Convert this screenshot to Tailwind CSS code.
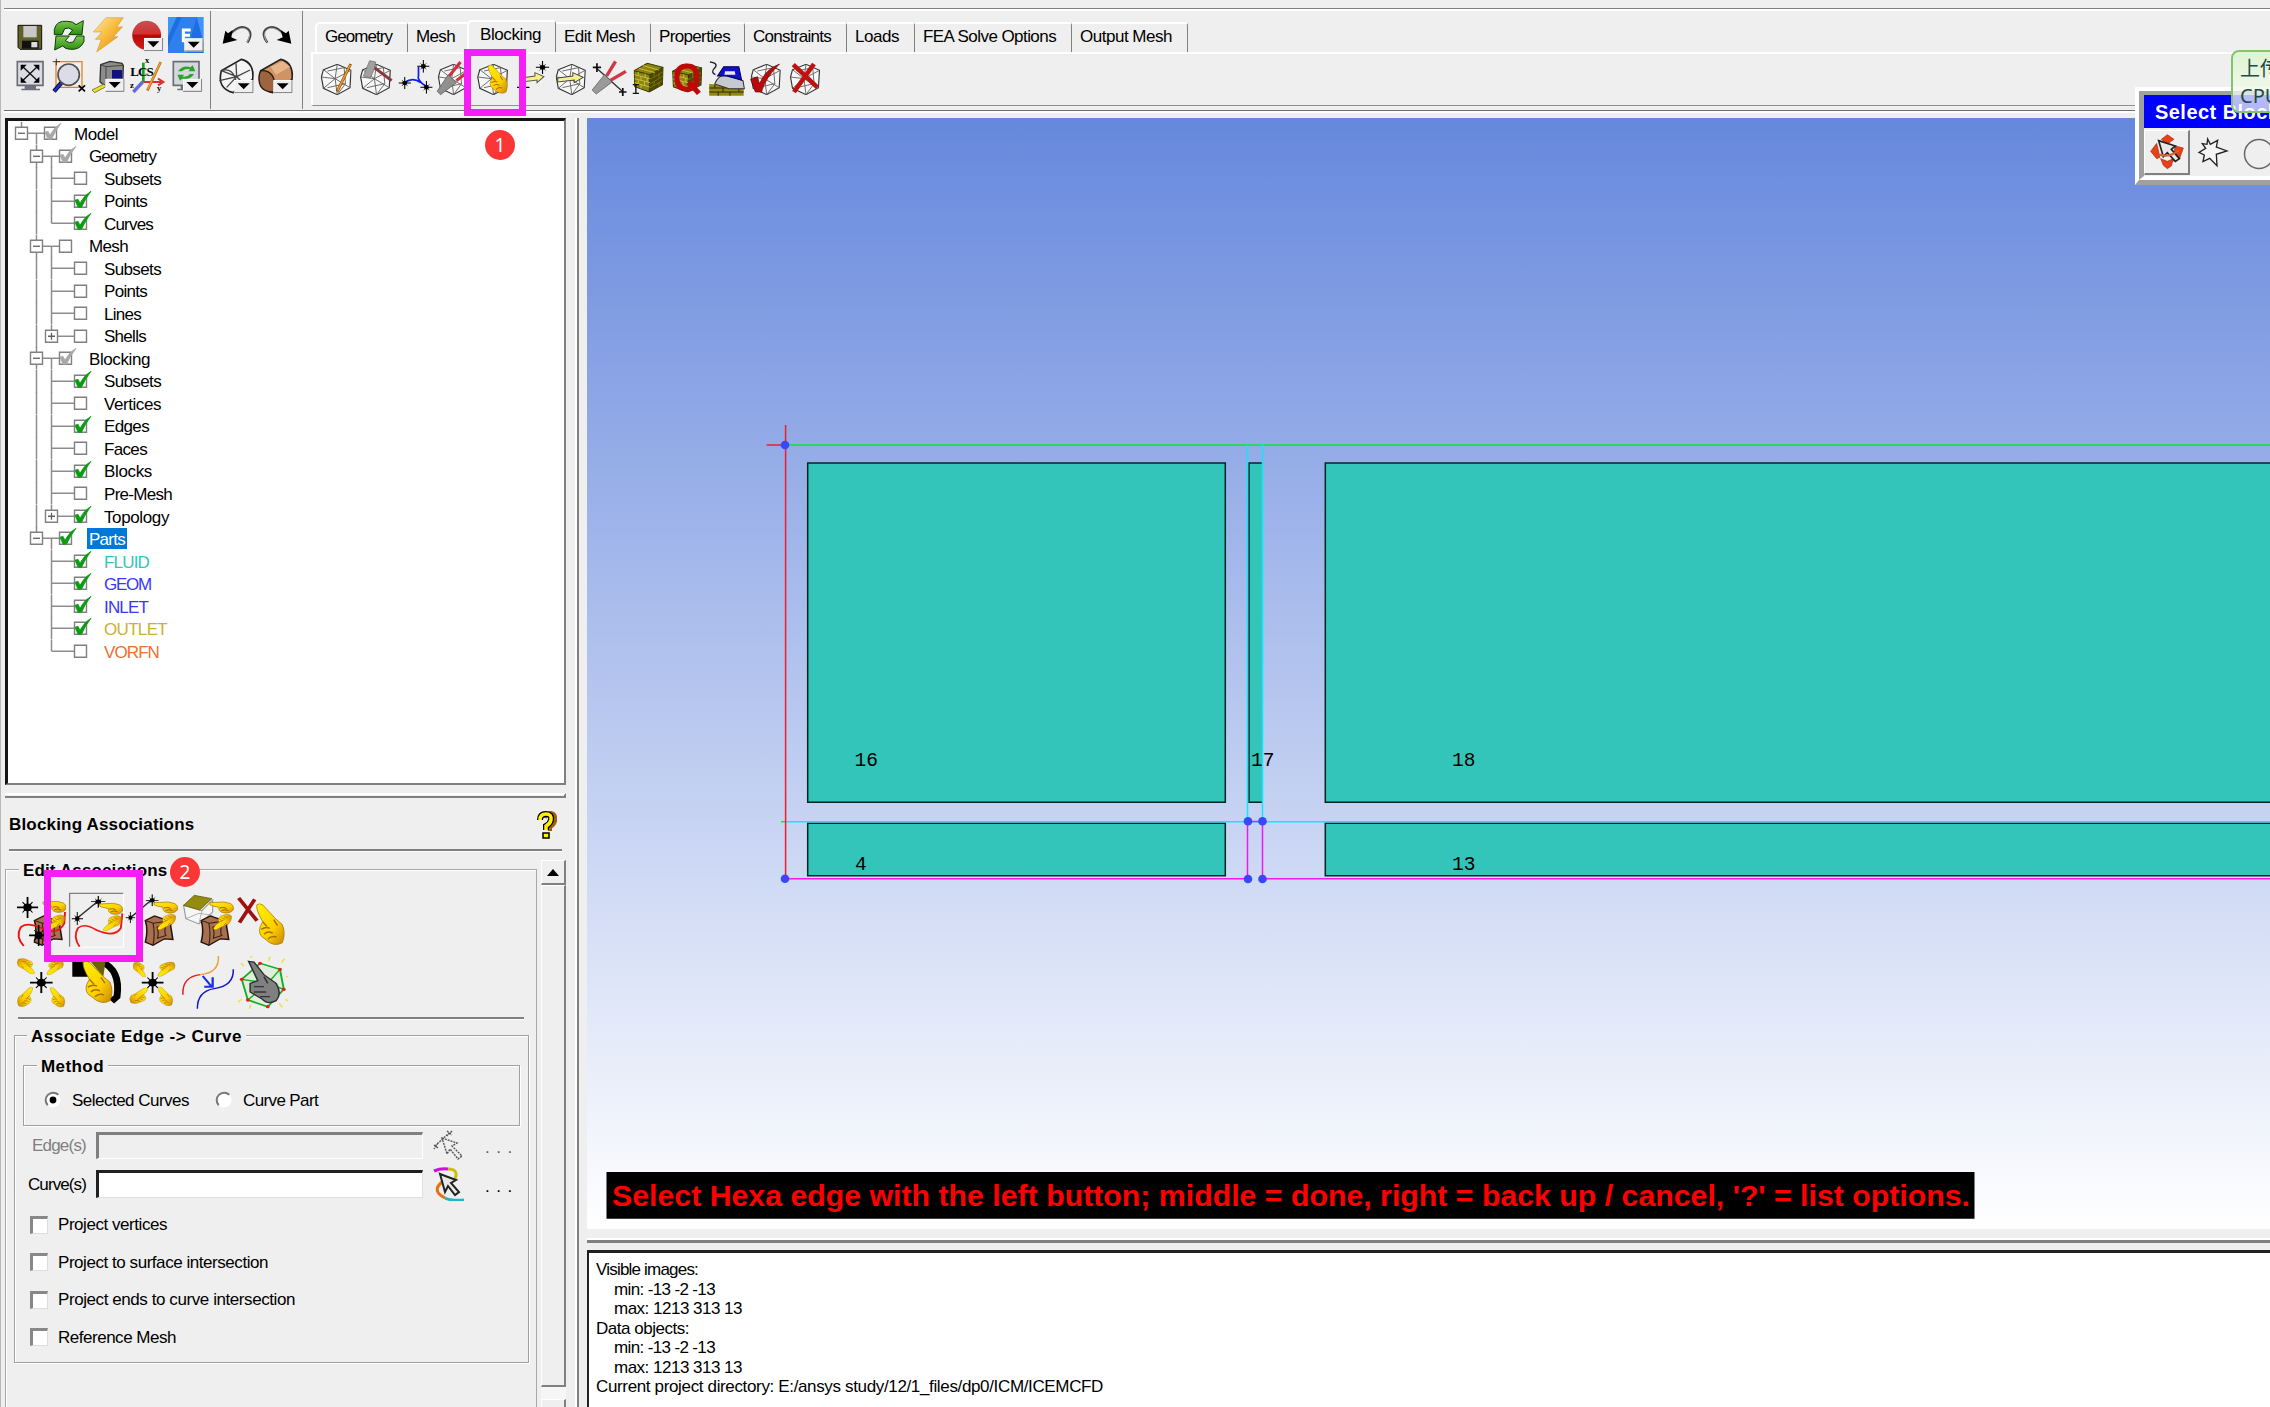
<!DOCTYPE html>
<html lang="en">
<head>
<meta charset="utf-8">
<title>ICEM CFD - Blocking</title>
<script src="https://cdn.jsdelivr.net/npm/@tailwindcss/browser@4"></script>
</head>
<body class="overflow-hidden">
<!-- shared glyphs -->
<svg class="absolute w-0 h-0" aria-hidden="true">
  <defs>
    <linearGradient id="gold" x1="0" y1="0" x2="1" y2="1"><stop offset="0" stop-color="#fff000"/><stop offset=".6" stop-color="#fbd000"/><stop offset="1" stop-color="#c98600"/></linearGradient>
    <linearGradient id="bolt" x1="0" y1="0" x2="1" y2="1"><stop offset="0" stop-color="#ffe9a0"/><stop offset=".5" stop-color="#f8b838"/><stop offset="1" stop-color="#d98212"/></linearGradient>
    <linearGradient id="red" x1="0" y1="0" x2="0" y2="1"><stop offset="0" stop-color="#c85050"/><stop offset=".45" stop-color="#d03030"/><stop offset=".5" stop-color="#b80808"/><stop offset="1" stop-color="#d41c1c"/></linearGradient>
    <linearGradient id="grn" x1="0" y1="0" x2="0" y2="1"><stop offset="0" stop-color="#7dc850"/><stop offset="1" stop-color="#2c8c10"/></linearGradient>
    <symbol id="wf" viewBox="0 0 90 95" preserveAspectRatio="none"><g fill="none" stroke="#333" stroke-width="3.4"><path d="M8 18L48 2L88 20L85 72L48 93L8 74L2 40Z" fill="#fff" fill-opacity=".5"/><path d="M42 45L48 2M42 45L88 20M42 45L85 72M42 45L48 93M42 45L8 74M42 45L8 18M2 40L42 45M68 12L72 60L48 93M68 12L20 22M72 60L20 72" stroke="#666" stroke-width="2.8"/></g></symbol>
    <symbol id="hand" viewBox="0 0 64 90" preserveAspectRatio="none"><path d="M3 3Q0 12 15 38L10 48Q4 66 20 74Q38 92 56 82Q64 62 56 44L42 32L16 4Q8 -2 3 3Z" fill="url(#gold)" stroke="#a87400" stroke-width="1.6"/><path d="M12 54Q22 48 30 52M18 64Q26 56 36 62M26 74Q34 66 44 70M15 38L24 48M38 34L46 46" fill="none" stroke="#b06c00" stroke-width="3"/></symbol>
    <symbol id="point" viewBox="0 0 60 40" preserveAspectRatio="none"><path d="M2 6Q0 14 10 16L24 20Q22 32 34 36Q50 40 58 28Q60 12 50 8L36 4Z" fill="url(#gold)" stroke="#b07c00" stroke-width="2"/><path d="M26 22Q36 18 42 24M30 30Q38 24 46 30" fill="none" stroke="#a86800" stroke-width="3"/></symbol>
    <symbol id="star" viewBox="0 0 60 66" preserveAspectRatio="none"><path d="M30 0V66M0 33H60" stroke="#000" stroke-width="5"/><circle cx="30" cy="33" r="12"/><path d="M16 17L44 49M44 17L16 49" stroke="#000" stroke-width="3"/></symbol>
    <symbol id="brown" viewBox="0 0 85 100" preserveAspectRatio="none"><path d="M6 20L30 6L50 14L80 18L72 34L78 78L56 76L26 96L6 86Q14 50 6 20Z" fill="#a87050" stroke="#20140c" stroke-width="4"/><path d="M6 20L26 28Q32 60 26 96M26 28L78 20M36 40L60 34Q54 56 60 66L38 74Q42 56 36 40" fill="none" stroke="#3a2010" stroke-width="3"/></symbol>
    <symbol id="dd" viewBox="0 0 58 40"><path d="M0 0H58V40H0Z" fill="#efefef"/><path d="M1 39V1H56" fill="none" stroke="#fff" stroke-width="3"/><path d="M0 38H56V0" fill="none" stroke="#777" stroke-width="3"/><path d="M10 10H46L28 28Z"/></symbol>
    <symbol id="bricks" viewBox="0 0 88 90" preserveAspectRatio="none"><path d="M2 24L40 2L86 14L84 66L46 88L4 72Z" fill="#8c8410" stroke="#3c3800" stroke-width="3"/><path d="M2 24L48 36L86 14" fill="none" stroke="#3c3800" stroke-width="3"/><path d="M48 36L46 88" stroke="#222" stroke-width="3"/><path d="M48 36L86 14L84 66L46 88Z" fill="#4c4804"/><path d="M3 36L48 48M3 48L48 60M4 60L47 73M14 28V38M34 33V44M22 42V53M40 46V58M14 52V63M32 56V68M22 65V77M16 17L62 30M28 9L74 22" stroke="#d0c840" stroke-width="2.5"/><path d="M48 50L85 28M48 64L85 41M47 76L84 54M60 30V42M74 34V46M60 56V68M74 60V70" stroke="#8c8410" stroke-width="2"/></symbol>
  </defs>
</svg>

<div class="w-[2270px] h-[1407px] overflow-hidden bg-[#efefef] border-l border-[#b8b8b8] flex flex-col font-['Liberation_Sans',Arial,sans-serif] text-[17px] leading-none text-black relative whitespace-nowrap">

  <!-- top toolbar -->
  <header class="h-[112px] shrink-0 pl-[3px] pt-[8px] flex flex-col">
    <div class="h-[3px] shrink-0 border-t-[1.5px] border-[#808080] border-b-2 border-b-white"></div>
    <div class="h-[98px] shrink-0 flex">
      <div class="w-[207px] pl-[12px] pt-[5px] flex flex-col gap-[4px] border-r border-[#808080] shrink-0">
        <div class="flex h-[38px]">
          <svg class="w-[35px] h-[38px]" viewBox="48 48 105 114"><path d="M54 76H125V148H60L54 142Z" fill="#606028" stroke="#111" stroke-width="3"/><path d="M70 78H110V112H70Z" fill="#c8c8c8"/><path d="M66 122H116V146H66Z" fill="#111"/><path d="M94 126H112V142H94Z" fill="#ddd"/></svg>
          <svg class="w-[39px] h-[38px]" viewBox="153 48 117 114"><g fill="url(#grn)" stroke="#0c3c06" stroke-width="3"><path d="M163 104V88Q170 60 202 64Q220 64 228 74L250 62L246 104H206L218 90Q206 80 194 86L186 104Z"/><path d="M252 108V124Q242 150 212 148Q196 148 188 138L164 150L168 108H208L196 122Q208 132 220 126L230 108Z"/></g></svg>
          <svg class="w-[39px] h-[38px]" viewBox="270 48 117 114"><path d="M318 53H370L350 82L368 80L340 110L354 110L290 156L304 118L286 118L306 96L280 96Z" fill="url(#bolt)" stroke="#c89030" stroke-width="1.5"/></svg>
          <svg class="w-[38px] h-[38px]" viewBox="387 48 114 114"><circle cx="440" cy="106" r="43" fill="url(#red)" stroke="#a03030" stroke-width="1"/><use href="#dd" x="432" y="114" width="58" height="40"/></svg>
          <svg class="w-[40px] h-[38px]" viewBox="501 48 120 114"><path d="M504 51H611V159H504Z" fill="#3f94f4"/><path d="M530 51H590L611 130V159H504V110Z" fill="#1f6de0"/><path d="M545 51H590L560 159H504V140Z" fill="#2f80ea"/><path d="M572 90H550V122H566M550 106H570" stroke="#fff" stroke-width="9" fill="none"/><use href="#dd" x="553" y="115" width="58" height="40"/></svg>
        </div>
        <div class="flex h-[42px]">
          <svg class="w-[35px] h-[38px]" viewBox="48 168 105 114"><path d="M52 179H129V250H52Z" fill="#dcdce4" stroke="#6c6c74" stroke-width="5"/><path d="M74 252H108V260H120V265H64V260H74Z" fill="#70707c"/><path d="M66 192L114 238M114 192L66 238" stroke="#111" stroke-width="4"/><path d="M62 188H80L62 206ZM118 188H100L118 206ZM62 242H80L62 224ZM118 242H100L118 224Z"/></svg>
          <svg class="w-[39px] h-[38px]" viewBox="153 168 117 114"><path d="M168 179H246V256H168Z" fill="none" stroke="#e88028" stroke-width="4"/><path d="M158 179H180M169 170V190" stroke="#222" stroke-width="2.5"/><path d="M162 268L186 240" stroke="#111" stroke-width="13"/><path d="M163 267L185 242" stroke="#1a2cf0" stroke-width="7"/><circle cx="206" cy="218" r="32" fill="#dcdce8" stroke="#505050" stroke-width="5"/><path d="M236 250L255 268M255 250L236 268" stroke="#000" stroke-width="5"/></svg>
          <svg class="w-[39px] h-[38px]" viewBox="270 168 117 114"><path d="M302 188L330 178L366 184L370 190L368 252H316L300 240Z" fill="#8c8c8c" stroke="#333" stroke-width="4"/><path d="M302 188L318 194L368 190M318 194V250" stroke="#444" stroke-width="3" fill="none"/><path d="M336 204H366V230H336Z" fill="#101080"/><path d="M276 264L312 246L318 254L284 272Z" fill="#f0e020" stroke="#444" stroke-width="2"/><use href="#dd" x="316" y="230" width="58" height="40"/></svg>
          <svg class="w-[38px] h-[38px]" viewBox="387 168 114 114"><path d="M430 240V182" stroke="#18a028" stroke-width="8"/><path d="M430 240H484M474 230L490 240L474 250" stroke="#d83030" stroke-width="6" fill="none"/><path d="M428 240L400 270" stroke="#6868d8" stroke-width="10"/><path d="M482 180L442 266" stroke="#c87410" stroke-width="8"/><path d="M481 182L443 262" stroke="#f0b040" stroke-width="3"/><g font-family="Liberation Serif,serif" font-weight="bold"><text x="391" y="222" font-size="39" textLength="70">LCS</text><text x="435" y="183" font-size="26">x</text><text x="390" y="259" font-size="26">z</text><text x="471" y="266" font-size="26">y</text></g></svg>
          <svg class="w-[40px] h-[38px]" viewBox="501 168 120 114"><path d="M520 179H597V250H520Z" fill="#d4d8dc" stroke="#6c6c74" stroke-width="5"/><path d="M542 252H576V265H532V260H542Z" fill="#70707c"/><path d="M534 208Q548 188 572 196L578 190L586 208H566L570 202Q556 198 546 208ZM582 216Q570 236 546 230L540 236L532 218H552L548 224Q562 226 570 216Z" fill="#28a428"/><use href="#dd" x="549" y="230" width="58" height="40"/></svg>
        </div>
      </div>
      <div class="w-[92px] pl-[7px] pt-[5px] flex flex-col gap-[4px] shrink-0 border-r-[1.5px] border-[#808080]">
        <div class="flex h-[38px]">
          <svg class="w-[40px] h-[38px]" viewBox="654 48 120 114"><path d="M742 128Q760 100 742 86Q718 72 690 104" fill="none" stroke="#444" stroke-width="7"/><path d="M742 126Q756 100 740 88Q718 76 692 106" fill="none" stroke="#ddd" stroke-width="2"/><path d="M668 131L676 92L684 100L698 90L694 112L712 120Z"/></svg>
          <svg class="w-[40px] h-[38px]" viewBox="774 48 120 114"><path d="M802 128Q782 100 800 86Q824 72 850 102" fill="none" stroke="#444" stroke-width="7"/><path d="M800 126Q786 100 802 88Q824 76 848 104" fill="none" stroke="#ddd" stroke-width="2"/><path d="M874 131L866 92L858 100L842 90L848 112L830 120Z"/></svg>
        </div>
        <div class="flex h-[42px]">
          <svg class="w-[39px] h-[38px]" viewBox="654 164 117 114"><path d="M664 202L724 168Q764 178 758 228L700 268Q650 256 664 202Z" fill="#f4f4f4" stroke="#222" stroke-width="5"/><path d="M664 202Q700 190 710 240Q710 260 700 268M708 180L710 220L658 232M710 220L750 200M680 252L710 220M664 202L710 220L740 250" fill="none" stroke="#444" stroke-width="4"/><use href="#dd" x="703" y="230" width="58" height="40"/></svg>
          <svg class="w-[41px] h-[38px]" viewBox="771 164 123 114"><path d="M782 202L842 168Q882 178 876 228L818 268Q768 256 782 202Z" fill="#d09464" stroke="#222" stroke-width="5"/><path d="M784 202Q830 200 824 266Q780 268 777 230Q776 208 784 202Z" fill="#9c6440" stroke="#2c1808" stroke-width="4"/><path d="M812 190L848 174L870 190L828 214Z" fill="#e8b48c"/><use href="#dd" x="820" y="230" width="58" height="40"/></svg>
        </div>
      </div>
      <!-- tabs -->
      <div class="flex-1 pl-[8px] pt-[9px] flex flex-col min-w-0">
        <nav class="flex items-end h-[32px] shrink-0 pl-[4px]">
          <div class="w-[93px] h-[30px] pl-[8px] pb-[3px] flex items-center rounded-tl-[5px] rounded-tr-[4px] border-t-2 border-l-2 border-white border-r-[1.5px] border-r-[#808080]"><span data-w="67">Geometry</span></div>
          <div class="w-[59px] h-[30px] pl-[8px] pb-[3px] flex items-center border-t-2 border-white"><span data-w="39">Mesh</span></div>
          <div class="w-[89px] h-[32px] pl-[11px] pb-[5px] flex items-center rounded-tl-[5px] rounded-tr-[4px] border-t-2 border-l-2 border-white border-r-[1.5px] border-r-[#808080]"><span data-w="61">Blocking</span></div>
          <div class="w-[95px] h-[30px] pl-[8px] pb-[3px] flex items-center rounded-tr-[4px] border-t-2 border-white border-r-[1.5px] border-r-[#808080]"><span data-w="71">Edit Mesh</span></div>
          <div class="w-[94px] h-[30px] pl-[8px] pb-[3px] flex items-center rounded-tr-[4px] border-t-2 border-white border-r-[1.5px] border-r-[#808080]"><span data-w="71">Properties</span></div>
          <div class="w-[102px] h-[30px] pl-[8px] pb-[3px] flex items-center rounded-tr-[4px] border-t-2 border-white border-r-[1.5px] border-r-[#808080]"><span data-w="78">Constraints</span></div>
          <div class="w-[68px] h-[30px] pl-[8px] pb-[3px] flex items-center rounded-tr-[4px] border-t-2 border-white border-r-[1.5px] border-r-[#808080]"><span data-w="44">Loads</span></div>
          <div class="w-[157px] h-[30px] pl-[8px] pb-[3px] flex items-center rounded-tr-[4px] border-t-2 border-white border-r-[1.5px] border-r-[#808080]"><span data-w="134">FEA Solve Options</span></div>
          <div class="w-[116px] h-[30px] pl-[8px] pb-[3px] flex items-center rounded-tr-[4px] border-t-2 border-white border-r-[1.5px] border-r-[#808080]"><span data-w="92">Output Mesh</span></div>
        </nav>
        <div class="h-[54px] shrink-0 border-t-2 border-l-2 border-white border-b-[1.5px] border-b-[#909090] pl-[7px] pt-[4px]">
          <svg class="w-[506px] h-[42px]" viewBox="60 172 1469 126" preserveAspectRatio="none">
            <use href="#wf" x="62" y="189" width="90" height="95"/><path d="M149 190L110 272" stroke="#704000" stroke-width="8"/><path d="M148 192L111 270" stroke="#f09820" stroke-width="5"/>
            <use href="#wf" x="176" y="189" width="90" height="95"/><path d="M214 198L268 240" stroke="#883838" stroke-width="9"/><path d="M204 180L222 184L218 204L206 232L186 226Z" fill="#a0a0a0" stroke="#666" stroke-width="2"/>
            <path d="M346 198V222Q340 240 370 258M306 246Q330 228 352 246" stroke="#1020e8" stroke-width="5" fill="none"/><use href="#star" x="342" y="178" width="36" height="38"/><use href="#star" x="288" y="228" width="36" height="38"/><use href="#star" x="351" y="241" width="36" height="38"/>
            <use href="#wf" x="402" y="189" width="86" height="95"/><path d="M468 184L432 230M496 208L456 240" stroke="#d03040" stroke-width="9"/><path d="M432 222L456 246L410 282L400 272Z" fill="#909090" stroke="#555" stroke-width="2"/>
            <use href="#wf" x="516" y="189" width="90" height="95"/><use href="#hand" x="546" y="192" width="62" height="90"/>
            <path d="M645 232L684 226V216L710 228L690 246V238L645 244Z" fill="#f8f080" stroke="#555" stroke-width="3"/><use href="#star" x="686" y="180" width="40" height="40"/><path d="M632 260H668M650 250V272" stroke="#000" stroke-width="4"/>
            <use href="#wf" x="744" y="189" width="88" height="95"/><path d="M750 232L794 226V216L824 230L798 246V238L750 244Z" fill="#f8f090" stroke="#444" stroke-width="3"/>
            <path d="M860 200L940 274" stroke="#333" stroke-width="4"/><path d="M852 200H876M864 188V214M928 274H950M939 262V286" stroke="#111" stroke-width="5"/><path d="M918 182L892 226M948 212L902 240" stroke="#d03848" stroke-width="10"/><path d="M886 222L908 244L862 280L850 268Z" fill="#9a9a9a" stroke="#555" stroke-width="2"/>
            <use href="#bricks" x="970" y="186" width="88" height="90"/><path d="M968 252H986M977 252V278M968 278H986" stroke="#111" stroke-width="4"/>
            <use href="#bricks" x="1082" y="188" width="88" height="88"/><path fill="none" stroke="#c00808" stroke-width="15" d="M1126 196Q1154 196 1154 230Q1154 266 1126 266Q1096 266 1096 230Q1096 196 1126 196M1130 244L1160 278"/>
            <path d="M1190 250L1290 256V285H1190Z" fill="#908810"/><path d="M1190 262H1290M1190 274H1290M1206 252V262M1230 262V274M1256 252V262M1216 274V285M1250 274V285M1276 262V274" stroke="#302c00" stroke-width="3"/><path d="M1206 250Q1216 222 1240 222L1288 240L1292 264H1248Z" fill="#c8c8d0" stroke="#333" stroke-width="3"/><path d="M1214 226L1232 198H1276L1284 238L1240 226Z" fill="#1010c8" stroke="#000060" stroke-width="3"/><path d="M1236 212H1264L1266 222H1234Z" fill="#e8e8f0"/><path d="M1192 184Q1220 188 1204 204Q1194 216 1208 222" fill="none" stroke="#222" stroke-width="4"/>
            <use href="#wf" x="1310" y="189" width="88" height="95"/><path d="M1310 236L1330 228L1336 250Q1352 206 1394 190Q1352 232 1342 274H1324Z" fill="#b80c0c" stroke="#700" stroke-width="2"/>
            <use href="#wf" x="1424" y="189" width="88" height="95"/><path d="M1434 192L1504 260M1494 190L1436 274" stroke="#c01010" stroke-width="13"/>
          </svg>
        </div>
      </div>
    </div>
    <div class="mt-[1px] h-[3px] shrink-0 border-t-[1.5px] border-[#707070] border-b-2 border-b-white"></div>
  </header>

  <div class="flex-1 flex min-h-0">
    <!-- left column -->
    <aside class="w-[574px] shrink-0 flex flex-col pl-[4px] pt-[6px]">
      <div id="tree" class="w-[561px] h-[667px] shrink-0 bg-white border-t-[3px] border-l-[3px] border-[#151515] border-r-2 border-b-2 border-r-[#808080] border-b-[#808080] pt-[1px] overflow-hidden"></div>
      <div class="mt-[8px] w-[561px] h-[5px] shrink-0 border-t-2 border-white border-b-2 border-b-[#808080] border-r-2 border-r-[#808080]"></div>
      <div class="w-[561px] h-[51px] shrink-0 pl-[4px] pr-[9px] pt-[2px] flex items-center justify-between">
        <span class="font-bold" data-b data-w="186">Blocking Associations</span>
        <svg class="w-[20px] h-[30px]" viewBox="0 0 20 30"><path d="M8 8Q9 3 14 3Q19 4 18 11Q17 15 13 17V21" fill="none" stroke="#a05c10" stroke-width="4"/><path d="M3 10Q3 4 9 4Q15 4 14 10Q13 14 9 16V20" fill="none" stroke="#000" stroke-width="6"/><path d="M3 10Q3 4 9 4Q15 4 14 10Q13 14 9 16V20" fill="none" stroke="#fff200" stroke-width="3.5"/><path d="M6 23H12V28H6Z" fill="#fff200" stroke="#000" stroke-width="1.5"/></svg>
      </div>
      <div class="ml-[4px] w-[553px] h-[3px] shrink-0 border-t-2 border-[#808080] border-b border-b-white"></div>
      <div class="flex flex-1 min-h-0">
        <!-- Edit Associations group -->
        <div class="mt-[17px] w-[532px] border-[1.5px] border-b-0 border-[#a8a8a8] shadow-[inset_1px_1px_0_#fff] flex flex-col pl-[8px]">
          <div class="h-[18px] -mt-[9px] shrink-0 ml-[5px] px-[4px] self-start bg-[#efefef] flex items-center font-bold"><span data-b data-w="145">Edit Associations</span></div>
          <svg class="mt-[9px] w-[275px] h-[126px] shrink-0 -ml-[1px]" viewBox="34 294 719 378" preserveAspectRatio="none">
            <use href="#brown" x="84" y="372" width="85" height="98"/><use href="#star" x="44" y="320" width="56" height="64"/><path d="M62 468Q40 440 54 412Q70 396 104 412Q150 440 168 400L170 366" fill="none" stroke="#f01010" stroke-width="5"/><use href="#star" x="76" y="404" width="50" height="64"/><use href="#point" x="110" y="330" width="64" height="40"/><g transform="translate(150 398) rotate(18) scale(1 -1)"><use href="#hand" x="-22" y="-30" width="40" height="58"/></g>
            <path d="M182 470V310H322" fill="none" stroke="#808080" stroke-width="3.5"/><path d="M184 472H323V312" fill="none" stroke="#fff" stroke-width="3"/>
            <path d="M200 386L256 334" stroke="#333" stroke-width="4"/><use href="#star" x="238" y="317" width="38" height="36"/><use href="#star" x="187" y="366" width="30" height="40"/><path d="M208 470Q190 440 204 414Q220 398 252 420Q300 444 316 414L320 370" fill="none" stroke="#f01818" stroke-width="5"/><use href="#point" x="258" y="336" width="64" height="40"/><g transform="translate(298 400) rotate(18) scale(1 -1)"><use href="#hand" x="-22" y="-30" width="40" height="58"/></g>
            <path d="M344 380L398 328" stroke="#333" stroke-width="4"/><use href="#star" x="381" y="313" width="34" height="36"/><use href="#star" x="328" y="366" width="26" height="34"/><use href="#brown" x="374" y="372" width="85" height="98"/><use href="#point" x="400" y="332" width="66" height="40"/><g transform="translate(440 396) rotate(18) scale(1 -1)"><use href="#hand" x="-22" y="-30" width="40" height="58"/></g>
            <path d="M480 346L528 362L556 330V366L520 402L486 386Z" fill="#f6f6f6" stroke="#999" stroke-width="3"/><path d="M520 402L528 362M486 386L520 370L556 376" stroke="#999" stroke-width="2" fill="none"/><path d="M508 316L554 326L522 360L480 346Z" fill="#948c10" stroke="#5c5400" stroke-width="2"/><use href="#brown" x="520" y="372" width="85" height="98"/><use href="#point" x="546" y="332" width="66" height="40"/><g transform="translate(586 396) rotate(18) scale(1 -1)"><use href="#hand" x="-22" y="-30" width="40" height="58"/></g>
            <path d="M624 324L672 392M666 328L626 398" stroke="#a01010" stroke-width="10"/><use href="#hand" x="668" y="340" width="80" height="130"/>
            <g transform="translate(67 528) scale(-1 -1)"><use href="#hand" x="-25" y="-25" width="50" height="50"/></g>
            <g transform="translate(146 532) scale(1 -1)"><use href="#hand" x="-25" y="-23" width="48" height="46"/></g>
            <g transform="translate(66 622) scale(-1 1)"><use href="#hand" x="-21" y="-31" width="44" height="62"/></g>
            <use href="#hand" x="130" y="592" width="42" height="62"/><use href="#star" x="78" y="546" width="60" height="64"/>
            <path d="M189 516H216L222 528L234 560H189Z"/><path d="M266 516Q316 540 306 620L292 634" fill="none" stroke="#000" stroke-width="18"/><path d="M236 514H276L270 560Z" fill="#6c6000"/><use href="#hand" x="214" y="512" width="84" height="132"/>
            <g transform="translate(364 538) scale(-1 -1)"><use href="#hand" x="-18" y="-24" width="36" height="48"/></g>
            <g transform="translate(437 536) scale(1 -1)"><use href="#hand" x="-26" y="-24" width="50" height="46"/></g>
            <g transform="translate(362 619) scale(-1 1)"><use href="#hand" x="-26" y="-26" width="52" height="50"/></g>
            <use href="#hand" x="412" y="590" width="42" height="60"/><use href="#star" x="370" y="546" width="58" height="64"/>
            <path d="M478 614Q476 560 524 554" fill="none" stroke="#e82020" stroke-width="4"/><path d="M524 554Q574 548 571 498" fill="none" stroke="#f0a040" stroke-width="4"/><path d="M516 656Q516 604 560 596Q612 588 610 538" fill="none" stroke="#1818c8" stroke-width="4"/><path d="M530 558L552 588M534 590H556V562" fill="none" stroke="#1830e0" stroke-width="6"/>
            <path d="M632 568L680 520L732 538L742 598L700 650L648 630Z" fill="#dfeedd" stroke="#10b020" stroke-width="5"/><path d="M632 568L700 580L732 538M700 580L742 598M648 630L700 580" stroke="#10b020" stroke-width="4" fill="none"/><path d="M650 514L664 516L690 554L722 580Q738 610 722 632Q700 646 684 626L654 606V580L674 572Z" fill="#808080" stroke="#303030" stroke-width="4"/><path d="M664 590H690M664 606H696M680 620H706M690 560L700 580" stroke="#333" stroke-width="4"/><path d="M658 504L656 498M702 512L706 500M736 518L744 506M748 560H758M746 628L756 634M730 640L738 652M656 644L652 656M622 636L632 628M630 520L638 528" stroke="#f0e040" stroke-width="4"/><g fill="#f01818"><circle cx="632" cy="568" r="5"/><circle cx="680" cy="520" r="5"/><circle cx="732" cy="538" r="5"/><circle cx="742" cy="598" r="5"/><circle cx="700" cy="650" r="5"/><circle cx="648" cy="630" r="5"/></g>
          </svg>
          <div class="mt-[3px] ml-[4px] w-[506px] h-[3px] shrink-0 border-t-2 border-[#808080] border-b border-b-white"></div>
          <!-- Associate group -->
          <div class="mt-[15px] w-[515px] h-[328px] shrink-0 border-[1.5px] border-[#a0a0a0] shadow-[inset_1px_1px_0_#fff,1px_1px_0_#fff] flex flex-col pl-[8px]">
            <div class="h-[18px] -mt-[9px] shrink-0 ml-[4px] px-[4px] self-start bg-[#efefef] flex items-center font-bold"><span data-b data-w="211">Associate Edge -&gt; Curve</span></div>
            <div class="mt-[20px] w-[497px] h-[61px] shrink-0 border-[1.5px] border-[#a0a0a0] shadow-[inset_1px_1px_0_#fff,1px_1px_0_#fff] flex flex-col">
              <div class="h-[18px] -mt-[9px] shrink-0 ml-[13px] px-[4px] self-start bg-[#efefef] flex items-center font-bold"><span data-b data-w="63">Method</span></div>
              <div class="flex items-center mt-[16px] ml-[20px]">
                <svg class="w-[18px] h-[18px] mr-[10px]" viewBox="0 0 18 18"><circle cx="9" cy="9" r="7.5" fill="#fff"/><path d="M3.7 14.3A7.5 7.5 0 0 1 14.3 3.7" fill="none" stroke="#777" stroke-width="2"/><circle cx="9" cy="9" r="3.4"/></svg>
                <span data-w="117" class="mr-[26px]">Selected Curves</span>
                <svg class="w-[18px] h-[18px] mr-[10px]" viewBox="0 0 18 18"><circle cx="9" cy="9" r="7.5" fill="#fff"/><path d="M3.7 14.3A7.5 7.5 0 0 1 14.3 3.7" fill="none" stroke="#777" stroke-width="2"/></svg>
                <span data-w="75">Curve Part</span>
              </div>
            </div>
            <div class="flex items-center h-[28px] mt-[5px] shrink-0">
              <div class="w-[64px] pr-[1px] flex justify-end text-[#808080]"><span data-w="54">Edge(s)</span></div>
              <div class="ml-[9px] w-[327px] h-[27px] border-t-[3px] border-l-[3px] border-[#808080] border-r border-b border-r-white border-b-white"></div>
              <svg class="ml-[9px] w-[32px] h-[32px]" viewBox="0 0 32 32" fill="none" stroke="#555" stroke-width="1.4"><path d="M2 16L6 19M6 14L2 20M3 17L17 4M15 2L20 6M20 2L15 7" stroke-dasharray="2 1"/><path d="M10 9L25 14L20 17L30 27L26 30L18 20L15 25Z" stroke-dasharray="2 1"/></svg>
              <span class="ml-[21px] pt-[4px] text-[#606060]" data-w="28">. . .</span>
            </div>
            <div class="flex items-center h-[28px] mt-[11px] shrink-0">
              <div class="w-[64px] pr-[1px] flex justify-end"><span data-w="58">Curve(s)</span></div>
              <div class="ml-[9px] w-[327px] h-[28px] bg-white border-t-[3px] border-l-[3px] border-[#202020] border-r border-b border-r-[#e0e0e0] border-b-[#e0e0e0]"></div>
              <svg class="ml-[10px] w-[32px] h-[34px]" viewBox="0 0 32 34" fill="none"><path d="M1 4Q8 1 15 2" stroke="#d010d8" stroke-width="3"/><path d="M15 2Q26 2 22 12" stroke="#c8c010" stroke-width="3"/><path d="M9 15Q-2 24 12 31" stroke="#e87010" stroke-width="3"/><path d="M12 31Q18 34 31 33" stroke="#20b8c0" stroke-width="3"/><path d="M7 7L23 13L18 16L26 25L22 28L15 19L12 25Z" fill="#e8e8e8" stroke="#222" stroke-width="2"/></svg>
              <span class="ml-[20px] pt-[4px]" data-w="28">. . .</span>
            </div>
            <div class="mt-[8px] ml-[7px] flex flex-col">
              <div class="h-[37.5px] flex items-center"><i class="w-[18px] h-[18px] mr-[10px] bg-white border-t-[3px] border-l-[3px] border-[#888] border-r border-b border-r-[#ddd] border-b-[#ddd]"></i><span data-w="109">Project vertices</span></div>
              <div class="h-[37.5px] flex items-center"><i class="w-[18px] h-[18px] mr-[10px] bg-white border-t-[3px] border-l-[3px] border-[#888] border-r border-b border-r-[#ddd] border-b-[#ddd]"></i><span data-w="210">Project to surface intersection</span></div>
              <div class="h-[37.5px] flex items-center"><i class="w-[18px] h-[18px] mr-[10px] bg-white border-t-[3px] border-l-[3px] border-[#888] border-r border-b border-r-[#ddd] border-b-[#ddd]"></i><span data-w="237">Project ends to curve intersection</span></div>
              <div class="h-[37.5px] flex items-center"><i class="w-[18px] h-[18px] mr-[10px] bg-white border-t-[3px] border-l-[3px] border-[#888] border-r border-b border-r-[#ddd] border-b-[#ddd]"></i><span data-w="118">Reference Mesh</span></div>
            </div>
          </div>
        </div>
        <!-- scrollbar -->
        <div class="mt-[8px] ml-[4px] w-[25px] flex flex-col bg-[#f6f6f6]">
          <div class="h-[25px] shrink-0 bg-[#efefef] border-t border-l border-white border-r-2 border-b-2 border-r-[#808080] border-b-[#808080] flex items-center justify-center"><svg class="w-[12px] h-[7px]" viewBox="0 0 12 7"><path d="M0 7L6 0L12 7Z"/></svg></div>
          <div class="h-[502px] shrink-0 bg-[#efefef] border-t border-l border-white border-r-2 border-b-2 border-r-[#808080] border-b-[#808080]"></div>
          <div class="h-[12px] shrink-0"></div>
          <div class="flex-1 bg-[#efefef] border-t border-l border-white border-r-2 border-r-[#808080]"></div>
        </div>
      </div>
    </aside>
    <div class="mt-[6px] w-[4px] shrink-0 border-l-2 border-white border-r-2 border-r-[#808080]"></div>

    <!-- right column -->
    <main class="ml-[8px] flex-1 min-w-0 flex flex-col pt-[6px]">
      <svg class="w-[1684px] h-[1111px] shrink-0 block" viewBox="587 118 1684 1111">
        <defs><linearGradient id="sky" x1="0" y1="0" x2="0" y2="1"><stop offset="0" stop-color="#6688dd"/><stop offset="1" stop-color="#fff"/></linearGradient></defs>
        <path d="M587 118H2271V1229H587Z" fill="url(#sky)"/>
        <g fill="#33c5b9" stroke="#0a2422" stroke-width="1.5">
          <path d="M807.7 463H1225.3V802.3H807.7Z"/><path d="M1262 463H1249V802.3H1262"/><path d="M2280 463H1325.3V802.3H2280"/>
          <path d="M807.7 823.3H1225.3V875.7H807.7Z"/><path d="M2280 823.3H1325.3V875.7H2280"/>
        </g>
        <g fill="none" stroke-width="1.5">
          <path d="M785 445H2271" stroke="#22dd55" stroke-width="2"/>
          <path d="M785 821.7H2271M1247.5 445V821M1262.5 443V821" stroke="#10e8fa"/>
          <path d="M781 821.7H785" stroke="#30e030"/>
          <path d="M785 878.7H1248M1262.5 878.7H2271M1247.5 821V879M1262.5 821V879M1248 821.5H1262" stroke="#f018f0"/>
          <path d="M785.6 425V879M766.6 445H785" stroke="#f01c30"/>
        </g>
        <g fill="#3848f8"><circle cx="785" cy="445" r="4.3"/><circle cx="785" cy="878.7" r="4.3"/><circle cx="1248" cy="821.3" r="4.3"/><circle cx="1262.5" cy="821.3" r="4.3"/><circle cx="1248" cy="879" r="4.3"/><circle cx="1262.5" cy="879" r="4.3"/></g>
        <g font-family="Liberation Mono,monospace" font-size="19.5"><text x="854.5" y="765.5">16</text><text x="1251" y="765.5">17</text><text x="1452" y="765.5">18</text><text x="855" y="870">4</text><text x="1452" y="870">13</text></g>
        <path d="M606.5 1172H1974.5V1218.7H606.5Z"/>
        <text x="612" y="1206" font-family="Liberation Sans,Arial,sans-serif" font-weight="bold" font-size="29" fill="#f00" textLength="1358" lengthAdjust="spacingAndGlyphs">Select Hexa edge with the left button; middle = done, right = back up / cancel, '?' = list options.</text>
      </svg>
      <div class="mt-[9px] h-[5px] shrink-0 border-t-2 border-white border-b-[3px] border-b-[#808080]"></div>
      <div class="mt-[7px] flex-1 bg-white border-t-[3px] border-l-[2px] border-[#202020] pl-[7px] pt-[7px]">
        <div class="h-[19.5px] flex items-center"><span data-w="102">Visible images:</span></div>
        <div class="h-[19.5px] flex items-center pl-[18px]"><span data-w="101">min: -13 -2 -13</span></div>
        <div class="h-[19.5px] flex items-center pl-[18px]"><span data-w="128">max: 1213 313 13</span></div>
        <div class="h-[19.5px] flex items-center"><span data-w="93">Data objects:</span></div>
        <div class="h-[19.5px] flex items-center pl-[18px]"><span data-w="101">min: -13 -2 -13</span></div>
        <div class="h-[19.5px] flex items-center pl-[18px]"><span data-w="128">max: 1213 313 13</span></div>
        <div class="h-[19.5px] flex items-center"><span data-w="507">Current project directory: E:/ansys study/12/1_files/dp0/ICM/ICEMCFD</span></div>
      </div>
    </main>
  </div>

  <!-- floating selection palette -->
  <div class="absolute left-[2134px] top-[87px] w-[200px] h-[98px] bg-[#efefef] border-t-[4px] border-l-[4px] border-white border-b-[5px] border-b-[#a0a0a0]">
    <div class="w-full h-full border-t-[4px] border-l-[5px] border-[#a0a0a0] border-b-[4px] border-b-white flex flex-col">
      <div class="h-[33px] shrink-0 bg-[#0000ff] text-white font-bold text-[20px] flex items-center pl-[11px]"><span data-b data-s="20" data-w="136">Select Blocks</span></div>
      <div class="flex mt-[2px]">
        <div class="w-[46px] h-[45px] border-t border-l border-white border-r-2 border-b-2 border-r-[#808080] border-b-[#808080] flex items-center justify-center"><svg class="w-[34px] h-[36px]" viewBox="120 314 102 108"><path d="M172 316L192 330L172 344L154 330ZM122 366L140 342L150 384L140 388ZM220 356L208 390L186 396L196 350ZM152 388L172 396L190 388L184 410L172 418L160 408Z" fill="#e84018" stroke="#a03010" stroke-width="2"/><path d="M146 334L196 350L184 360L208 388L196 396L172 370L160 382Z" fill="#e8e8e8" stroke="#222" stroke-width="5"/><path d="M150 376Q180 386 206 362" fill="none" stroke="#d86030" stroke-width="7"/></svg></div>
        <svg class="ml-[7px] mt-[7px] w-[32px] h-[32px]" viewBox="264 320 96 96"><path d="M296 326L304 342L326 330L322 350L354 362L322 372L324 406L302 384L282 394L286 374L270 366L290 354L280 340L294 342Z" fill="#f4f4f4" stroke="#222" stroke-width="4"/></svg>
        <svg class="ml-[14px] mt-[8px] w-[32px] h-[33px]" viewBox="0 0 32 33"><circle cx="16" cy="16" r="14.5" fill="none" stroke="#666" stroke-width="1.5"/></svg>
      </div>
    </div>
  </div>
  <!-- upload tooltip -->
  <div class="absolute left-[2230px] top-[50px] w-[120px] h-[63px] rounded-[8px] border-2 border-[#84c470] bg-linear-to-b from-[#dcf4cc]/90 to-[#ffffff]/70 pl-[7px] pt-[3px] text-[#1c4c48] text-[20px] font-['Noto_Sans','Noto_Sans_CJK_SC',sans-serif]">
    <div class="h-[27px] leading-[27px]">上传</div>
    <div class="h-[27px] leading-[27px]">CPU</div>
  </div>
  <!-- step annotations -->
  <div class="absolute left-[463px] top-[49px] w-[62px] h-[67px] border-[7px] border-[#f51ff5]"></div>
  <div class="absolute left-[43px] top-[870px] w-[99px] h-[92px] border-[7px] border-[#f51ff5]"></div>
  <div class="absolute left-[484px] top-[130px] w-[30px] h-[30px] rounded-full bg-[#fb3636] text-white text-[19px] font-['Noto_Sans',sans-serif] flex items-center justify-center">1</div>
  <div class="absolute left-[169px] top-[857px] w-[30px] h-[30px] rounded-full bg-[#fb3636] text-white text-[19px] font-['Noto_Sans',sans-serif] flex items-center justify-center">2</div>
</div>

<script>
// [depth, label, check (0 none, 1 green, 2 grey), expander, label width, colour class, last child]
const rows = [
  [0,'Model',2,'-',44],
  [1,'Geometry',2,'-',67],[2,'Subsets',0,'',57],[2,'Points',1,'',43],[2,'Curves',1,'',49,'',1],
  [1,'Mesh',0,'-',39],[2,'Subsets',0,'',57],[2,'Points',0,'',43],[2,'Lines',0,'',37],[2,'Shells',0,'+',42,'',1],
  [1,'Blocking',2,'-',61],[2,'Subsets',1,'',57],[2,'Vertices',0,'',57],[2,'Edges',1,'',45],[2,'Faces',0,'',43],[2,'Blocks',1,'',48],[2,'Pre-Mesh',0,'',68],[2,'Topology',1,'+',65,'',1],
  [1,'Parts',1,'-',36,'bg-[#0078d7] text-white',1],
  [2,'FLUID',1,'',45,'text-[#33c5b9]'],[2,'GEOM',1,'',47,'text-[#3838f8]'],[2,'INLET',1,'',44,'text-[#3838f8]'],[2,'OUTLET',1,'',63,'text-[#ccb030]'],[2,'VORFN',0,'',55,'text-[#f07030]',1]
];
const H = 22.53, M = H / 2, X = [13.5, 28.5, 43.5];
let inParts = false;
document.getElementById('tree').innerHTML = rows.map(([d, t, c, e, w, cls, last]) => {
  if (t === 'Parts') inParts = true;
  const L = [], x = X[d], bx = d === 0 ? 36 : d === 1 ? 51 : 66;
  const line = p => L.push(`<path d="${p}" stroke="#8c8c8c" stroke-width="1.5" fill="none"/>`);
  if (d === 0) line(`M${x} 0V${M}`);
  line(`M${x} ${M}H${bx}`);
  if (d < 2) line(`M${X[d + 1]} ${M}V${H}`);
  if (d === 1) line(`M${x} 0V${last ? M : H}`);
  if (d === 2) { line(`M${x} 0V${last ? M : H}`); if (!inParts) line(`M${X[1]} 0V${H}`); }
  if (e) L.push(`<path d="M${x - 6} ${M - 6}h12v12h-12Z" fill="#fff" stroke="#808080" stroke-width="1.4"/><path d="M${x - 3.5} ${M}h7${e === '+' ? `M${x} ${M - 3.5}v7` : ''}" stroke="#606060" stroke-width="1.3"/>`);
  L.push(`<path d="M${bx + .5} ${M - 6}h12v12h-12Z" fill="#fff" stroke="#808080" stroke-width="1.4"/>`);
  if (c) { const g = c === 1 ? '#0c9c14' : '#a8a8a8';
    L.push(`<path d="M${bx + 1} ${M - 1}L${bx + 4} ${M - 2}L${bx + 6} ${M + 2}Q${bx + 10} ${M - 6} ${bx + 17} ${M - 10}Q${bx + 11} ${M - 2} ${bx + 7.5} ${M + 6}H${bx + 4}Z" fill="${g}" stroke="${g}" stroke-width=".8"/>`); }
  const tx = [66, 81, 96][d];
  return `<div class="h-[22.53px] flex items-center"><svg class="shrink-0 overflow-visible" width="${tx - 2}" height="${H}">${L.join('')}</svg><span class="pt-[3px] pb-[1px] px-[2px] ${cls || ''}"><span data-w="${w}">${t}</span></span></div>`;
}).join('');

// Set each label to its native bitmap-font width through letter spacing.
const ctx = document.createElement('canvas').getContext('2d');
document.querySelectorAll('[data-w]').forEach(s => {
  ctx.font = `${'b' in s.dataset ? 'bold ' : ''}${s.dataset.s || 17}px "Liberation Sans", Arial, sans-serif`;
  const d = (+s.dataset.w - ctx.measureText(s.textContent).width) / s.textContent.length;
  s.style.letterSpacing = d.toFixed(3) + 'px';
});
</script>
</body>
</html>
